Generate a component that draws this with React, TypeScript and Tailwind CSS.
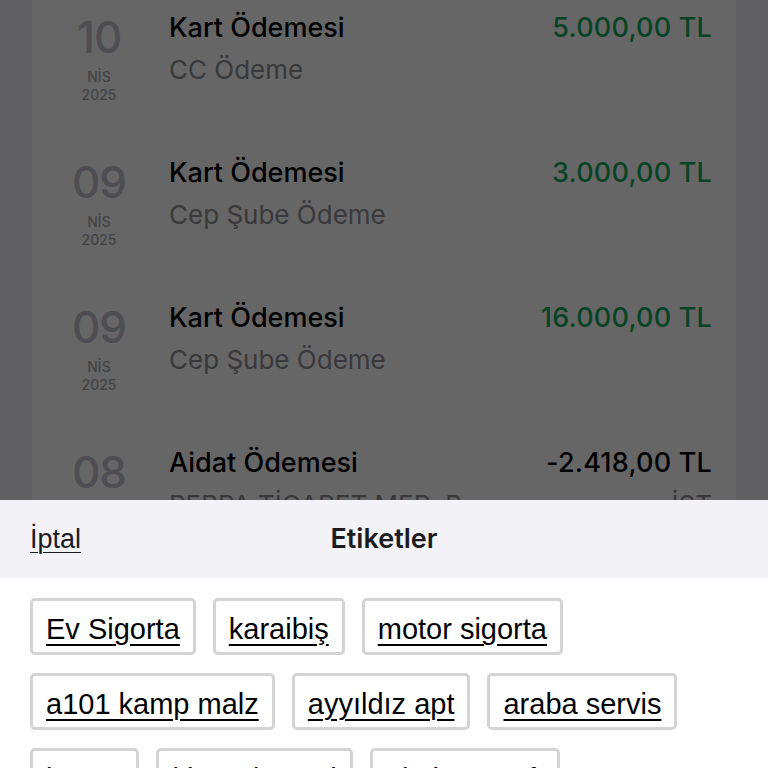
import React from "react";

interface Txn {
  day: string;
  month: string;
  year: string;
  title: string;
  desc: string;
  descRight?: string;
  amount: string;
  positive: boolean;
}

const txns: Txn[] = [
  { day: "10", month: "NİS", year: "2025", title: "Kart Ödemesi", desc: "CC Ödeme", amount: "5.000,00 TL", positive: true },
  { day: "09", month: "NİS", year: "2025", title: "Kart Ödemesi", desc: "Cep Şube Ödeme", amount: "3.000,00 TL", positive: true },
  { day: "09", month: "NİS", year: "2025", title: "Kart Ödemesi", desc: "Cep Şube Ödeme", amount: "16.000,00 TL", positive: true },
  { day: "08", month: "NİS", year: "2025", title: "Aidat Ödemesi", desc: "PERPA TİCARET MER. B", descRight: "İST", amount: "-2.418,00 TL", positive: false },
];

const tags = [
  "Ev Sigorta",
  "karaibiş",
  "motor sigorta",
  "a101 kamp malz",
  "ayyıldız apt",
  "araba servis",
  "kasap",
  "kira ödemesi",
  "okul masrafı",
];

const TxnRow = ({ t }: { t: Txn }) => (
  <div className="flex h-[145px] items-start">
    <div className="flex w-[100px] flex-col items-center pt-[15px] pl-[34px]">
      <span className="text-[44px] leading-[44px] font-medium tracking-[-1px] text-[#c2c2cc]">
        {t.day}
      </span>
      <span className="mt-[9px] text-[14px] leading-[18px] font-medium text-[#a8a8b0]">
        {t.month}
      </span>
      <span className="text-[14px] leading-[18px] font-medium text-[#a8a8b0]">
        {t.year}
      </span>
    </div>
    <div className="ml-[37px] flex flex-1 flex-col pt-[13px]">
      <div className="flex items-center justify-between">
        <span className="text-[27px] leading-[30px] font-medium text-black">
          {t.title}
        </span>
        <span
          className={
            t.positive
              ? "text-[27px] leading-[30px] font-medium tracking-[0.2px] text-[#17a862]"
              : "text-[27px] leading-[30px] font-medium tracking-[0.2px] text-black"
          }
        >
          {t.amount}
        </span>
      </div>
      <div className="mt-[12px] flex items-center justify-between">
        <span className="text-[26px] leading-[30px] text-[#909094]">{t.desc}</span>
        {t.descRight && (
          <span className="text-[26px] leading-[30px] text-[#909094]">{t.descRight}</span>
        )}
      </div>
    </div>
  </div>
);

export default function App() {
  return (
    <div
      className="relative h-[768px] w-[768px] overflow-hidden bg-[#f2f2f7]"
      style={{ fontFamily: "Inter, 'Noto Sans', sans-serif" }}
    >
      <div className="mx-[32px] bg-white pr-[24px]">
        {txns.map((t, i) => (
          <TxnRow key={i} t={t} />
        ))}
        <div className="h-[200px]" />
      </div>

      {/* dimming overlay */}
      <div className="absolute inset-0 bg-black/60" />

      {/* bottom sheet */}
      <div className="absolute inset-x-0 top-[500px] bottom-0 bg-white">
        <div className="relative flex h-[78px] items-center bg-[#f2f2f7] px-[30px]">
          <span
            className="text-[27px] text-[#1c1c1e] underline decoration-1 underline-offset-[4px]"
            style={{ fontFamily: "'Liberation Sans', Arial, sans-serif" }}
          >
            İptal
          </span>
          <span className="absolute inset-x-0 text-center text-[27px] font-semibold text-[#1c1c1e]">
            Etiketler
          </span>
        </div>
        <div className="flex flex-wrap gap-x-[17px] gap-y-[18px] px-[30px] pt-[20px]">
          {tags.map((tag) => (
            <div
              key={tag}
              className="flex h-[57px] items-center rounded-[5px] border-[3px] border-[#d4d4d4] bg-white px-[13px] pt-[5px]"
            >
              <span
                className="text-[29px] leading-[30px] text-black underline decoration-2 underline-offset-[5px]"
                style={{ fontFamily: "'Liberation Sans', Arial, sans-serif" }}
              >
                {tag}
              </span>
            </div>
          ))}
        </div>
      </div>
    </div>
  );
}
